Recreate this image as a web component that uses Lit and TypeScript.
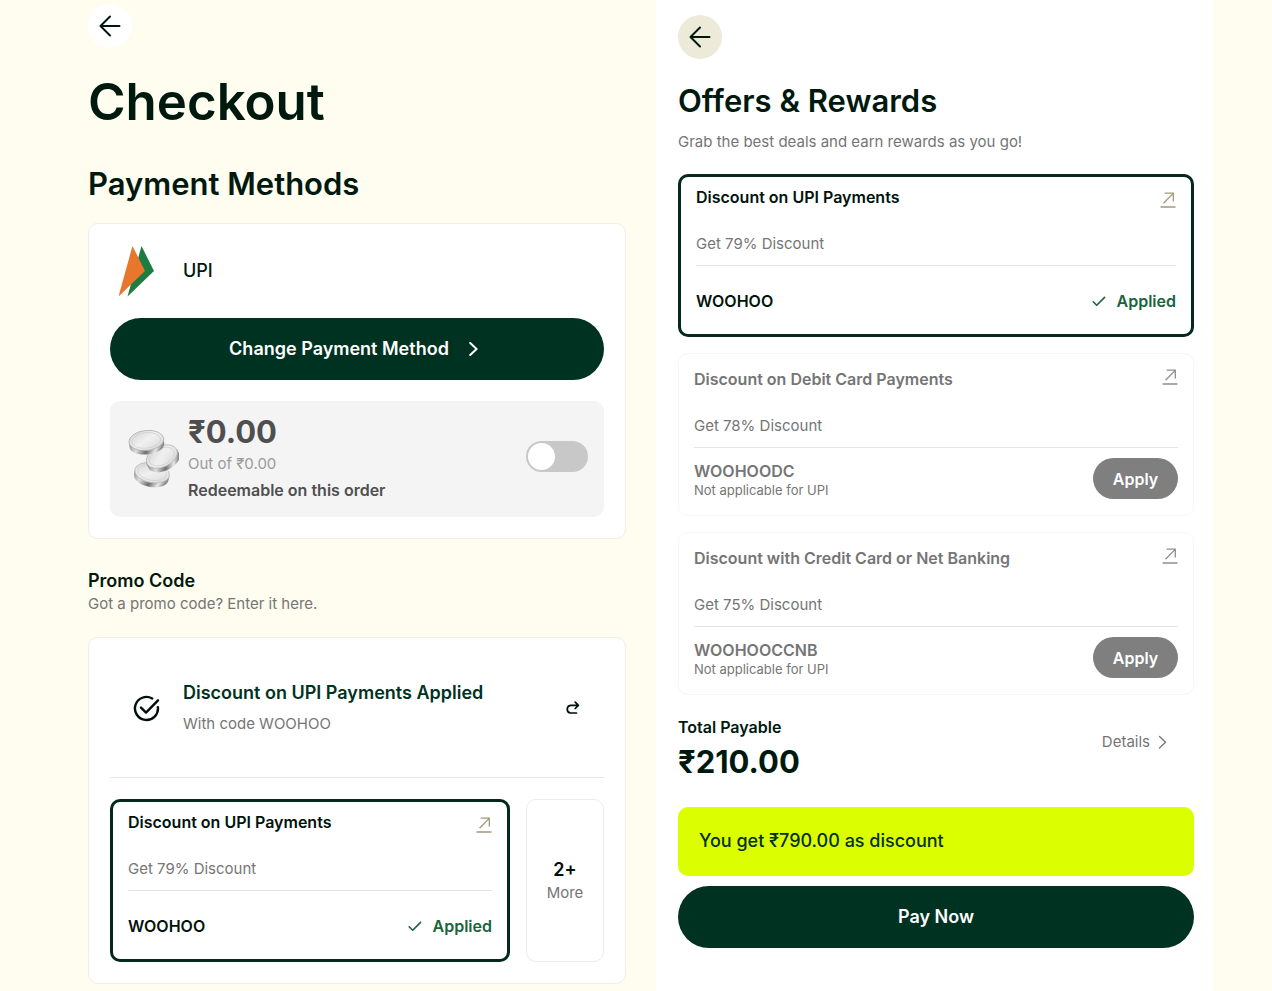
import { LitElement, html, css, nothing } from "lit";
import { customElement, property, state } from "lit/decorators.js";
import { classMap } from "lit/directives/class-map.js";

interface Offer {
  title: string;
  detail: string;
  code: string;
  applied: boolean;
  note?: string;
}

const OFFERS: Offer[] = [
  { title: "Discount on UPI Payments", detail: "Get 79% Discount", code: "WOOHOO", applied: true },
  {
    title: "Discount on Debit Card Payments",
    detail: "Get 78% Discount",
    code: "WOOHOODC",
    applied: false,
    note: "Not applicable for UPI",
  },
  {
    title: "Discount with Credit Card or Net Banking",
    detail: "Get 75% Discount",
    code: "WOOHOOCCNB",
    applied: false,
    note: "Not applicable for UPI",
  },
];

const base = css`
  *,
  *::before,
  *::after {
    box-sizing: border-box;
  }
  h1,
  h2,
  h3,
  p {
    margin: 0;
  }
  button {
    font: inherit;
    border: 0;
    padding: 0;
    background: none;
    color: inherit;
    cursor: pointer;
  }
  a {
    color: inherit;
    text-decoration: none;
  }
  svg {
    display: block;
    flex: none;
  }
`;

const backArrow = html`<svg width="22" height="22" viewBox="0 0 22 22" fill="none" stroke="currentColor" stroke-width="2" stroke-linecap="round" stroke-linejoin="round" aria-hidden="true">
  <path d="M20.5 11H1.5M11 1.5L1.5 11L11 20.5" />
</svg>`;

const chevron = html`<svg width="16" height="14" viewBox="0 0 16 14" fill="none" stroke="currentColor" stroke-width="2" stroke-linecap="round" stroke-linejoin="round" aria-hidden="true">
  <path d="M1.2 1L7.6 7L1.2 13" />
</svg>`;

const thinChevron = html`<svg width="9" height="14" viewBox="0 0 9 14" fill="none" stroke="currentColor" stroke-width="1.3" stroke-linecap="round" stroke-linejoin="round" aria-hidden="true">
  <path d="M1.5 1.5L7.5 7.2L1.5 13" />
</svg>`;

@customElement("offer-card")
export class OfferCard extends LitElement {
  @property({ attribute: false }) offer!: Offer;

  static styles = [
    base,
    css`
      :host {
        display: block;
        min-width: 0;
      }
      .card {
        display: flex;
        flex-direction: column;
        height: 100%;
        min-height: 163px;
        padding: 14px 15px 6px;
        border: 1px solid #f7f7f7;
        border-radius: 10px;
        background: #fff;
        color: #757575;
        font-size: 15px;
        line-height: 22px;
      }
      .card.applied {
        padding: 9px 15px 0;
        border: 3px solid #04291c;
        color: #00130c;
      }
      .head {
        display: flex;
        justify-content: space-between;
        align-items: flex-start;
        gap: 12px;
        height: 22px;
      }
      .title,
      .code,
      .status {
        font-size: 16px;
        font-weight: 600;
      }
      .open {
        padding-top: 1px;
        color: #8f8f8f;
      }
      .applied .open {
        padding-top: 6px;
        color: #a3987c;
      }
      .detail {
        margin-top: 25px;
        padding-bottom: 10px;
        border-bottom: 1px solid #e6e6e6;
        color: #757575;
      }
      .foot {
        display: flex;
        flex: 1;
        align-items: center;
        justify-content: space-between;
        gap: 12px;
      }
      .applied .foot {
        padding-top: 2px;
      }
      .note {
        font-size: 13px;
        line-height: 16px;
      }
      .status {
        display: flex;
        align-items: center;
        gap: 11px;
        color: #19633d;
      }
      .apply {
        min-width: 85px;
        height: 41px;
        border-radius: 21px;
        background: #7f7f7f;
        color: #fff;
        font-size: 16px;
        font-weight: 600;
      }
    `,
  ];

  render() {
    const { title, detail, code, applied, note } = this.offer;
    return html`<article class=${classMap({ card: true, applied })}>
      <div class="head">
        <h3 class="title">${title}</h3>
        <a class="open" href="#" aria-label=${`Open ${title}`}>
          <svg width="16" height="16" viewBox="0 0 16 16" fill="none" stroke="currentColor" stroke-width="1.3">
            <path d="M3.5 11.3L13 1.6M4.6 1.2H13.3V9.6M0.5 15H15.5" />
          </svg>
        </a>
      </div>
      <p class="detail">${detail}</p>
      <div class="foot">
        <div>
          <p class="code">${code}</p>
          ${note ? html`<p class="note">${note}</p>` : nothing}
        </div>
        ${applied
          ? html`<span class="status">
              <svg width="14" height="11" viewBox="0 0 14 11" fill="none" stroke="currentColor" stroke-width="1.6" stroke-linecap="round" stroke-linejoin="round" aria-hidden="true">
                <path d="M1.2 5.8L4.7 9.3L12.6 1.4" />
              </svg>
              Applied
            </span>`
          : html`<button class="apply" type="button">Apply</button>`}
      </div>
    </article>`;
  }
}

@customElement("app-root")
export class AppRoot extends LitElement {
  @state() private redeem = false;

  static styles = [
    base,
    css`
      :host {
        display: block;
        background: #fffcf0;
        color: #00190f;
        font-family: Inter, "Liberation Sans", sans-serif;
        font-size: 15px;
        line-height: 22px;
      }
      .page {
        display: grid;
        grid-template-columns: minmax(0, 538fr) minmax(0, 557fr);
        column-gap: 30px;
        min-height: 100vh;
        padding: 0 59px 0 88px;
      }
      .checkout {
        padding: 4px 0 6px;
      }
      .offers {
        padding: 15px 19px 40px 22px;
        background: #fff;
      }
      .back {
        display: grid;
        place-items: center;
        width: 44px;
        height: 44px;
        border-radius: 50%;
        background: #fff;
      }
      .offers .back {
        background: #eeead9;
      }
      h1 {
        margin-top: 24px;
        font-size: 51px;
        line-height: 60px;
        font-weight: 600;
      }
      h2 {
        font-size: 31px;
        line-height: 40px;
        font-weight: 600;
      }
      .checkout h2 {
        margin-top: 32px;
      }
      .offers h2 {
        margin-top: 22px;
      }
      .muted {
        color: #757575;
      }
      .panel {
        display: flex;
        flex-direction: column;
        gap: 21px;
        padding: 21px;
        border: 1px solid #eeeeea;
        border-radius: 10px;
        background: #fff;
      }
      .payment {
        margin-top: 19px;
      }
      .method {
        display: flex;
        align-items: center;
        height: 52px;
      }
      .lead {
        flex: none;
        width: 73px;
        padding-left: 7px;
      }
      .method-name {
        font-size: 18px;
        font-weight: 500;
      }
      .primary {
        display: flex;
        align-items: center;
        justify-content: center;
        gap: 20px;
        width: 100%;
        height: 62px;
        border-radius: 31px;
        background: #003222;
        color: #fff;
        font-size: 18px;
        font-weight: 600;
      }
      .wallet {
        display: flex;
        align-items: center;
        height: 116px;
        padding: 0 16px 6px 18px;
        border-radius: 10px;
        background: #f4f4f4;
        color: #4f4f4f;
      }
      .wallet-text {
        flex: 1;
        padding-left: 9px;
      }
      .amount {
        font-size: 31px;
        line-height: 42px;
        font-weight: 700;
      }
      .limit {
        margin-bottom: 4px;
        color: #9a9a9a;
      }
      .strong {
        font-size: 16px;
        font-weight: 600;
      }
      .toggle {
        appearance: none;
        flex: none;
        display: flex;
        align-items: center;
        width: 62px;
        height: 31px;
        margin: 0;
        padding: 0 2px;
        border-radius: 16px;
        background: #c8c8c8;
        cursor: pointer;
      }
      .toggle::before {
        content: "";
        width: 27px;
        height: 27px;
        border-radius: 50%;
        background: #fff;
      }
      .toggle:checked {
        justify-content: flex-end;
        background: #003222;
      }
      .promo-title {
        margin-top: 30px;
        font-size: 18px;
        line-height: 24px;
        font-weight: 600;
      }
      .promo {
        margin-top: 22px;
      }
      .promo-head {
        display: flex;
        align-items: center;
        height: 119px;
        padding-bottom: 20px;
        border-bottom: 1px solid #e8e8e8;
      }
      .check {
        flex: none;
        width: 73px;
        padding-left: 23px;
        color: #00100a;
      }
      .promo-text {
        flex: 1;
      }
      .applied-title {
        margin-bottom: 8px;
        color: #003222;
        font-size: 18px;
        line-height: 24px;
        font-weight: 600;
      }
      .undo {
        margin-right: 24px;
        color: #00100a;
      }
      .promo-row {
        display: grid;
        grid-template-columns: minmax(0, 400fr) minmax(0, 78fr);
        gap: 16px;
      }
      .more {
        display: flex;
        flex-direction: column;
        align-items: center;
        justify-content: center;
        border: 1px solid #ececec;
        border-radius: 10px;
      }
      .more-count {
        color: #00100a;
        font-size: 18px;
        line-height: 24px;
        font-weight: 600;
      }
      .intro {
        margin-top: 10px;
      }
      .list {
        display: grid;
        gap: 16px;
        margin-top: 21px;
      }
      .total {
        display: flex;
        align-items: flex-start;
        justify-content: space-between;
        margin-top: 21px;
      }
      .total .amount {
        margin-top: 3px;
      }
      .details {
        display: flex;
        align-items: center;
        gap: 8px;
        margin: 15px 27px 0 0;
        color: #757575;
      }
      .saving {
        margin: 24px 0 10px;
        padding: 22px 21px 23px;
        border-radius: 10px;
        background: #dbff00;
        color: #053020;
        font-size: 18px;
        line-height: 24px;
        font-weight: 500;
      }
    `,
  ];

  private onToggle(e: Event) {
    this.redeem = (e.target as HTMLInputElement).checked;
  }

  private coins() {
    return html`<svg width="51" height="66" viewBox="0 -6 51 66" aria-hidden="true">
      <defs>
        <linearGradient id="rim" x1="0" x2="1" y1="0" y2="0.2">
          <stop offset="0" stop-color="#8a8a8a" />
          <stop offset="0.3" stop-color="#dedede" />
          <stop offset="0.6" stop-color="#6f6f6f" />
          <stop offset="0.85" stop-color="#e8e8e8" />
          <stop offset="1" stop-color="#8c8c8c" />
        </linearGradient>
        <linearGradient id="face" x1="0" x2="1" y1="0" y2="1">
          <stop offset="0" stop-color="#d2d2d2" />
          <stop offset="0.5" stop-color="#f0f0f0" />
          <stop offset="1" stop-color="#d6d6d6" />
        </linearGradient>
      </defs>
      <g transform="rotate(10 23 47)">
        <path d="M6 43V48C6 54 14 58 23.500 58S41 54 41 48V43Z" fill="url(#rim)" />
        <ellipse cx="23.500" cy="43.500" rx="17.500" ry="10" fill="url(#face)" stroke="#b5b5b5" stroke-width="0.7" />
        <ellipse cx="23.500" cy="43.500" rx="14.500" ry="7.800" fill="none" stroke="#cccccc" stroke-width="0.6" />
      </g>
      <g transform="rotate(-25 34 28)">
        <path d="M17 27V32C17 38 25 42 34 42S51 38 51 32V27Z" fill="url(#rim)" />
        <ellipse cx="34" cy="27.500" rx="16.500" ry="10.500" fill="url(#face)" stroke="#b0b0b0" stroke-width="0.7" />
        <ellipse cx="34" cy="27.500" rx="13.500" ry="8.200" fill="none" stroke="#cccccc" stroke-width="0.6" />
      </g>
      <g transform="rotate(-6 18 13)">
        <path d="M1 11V16C1 22 9 25.500 18.500 25.500S36 22 36 16V11Z" fill="url(#rim)" />
        <ellipse cx="18.500" cy="11.500" rx="17.500" ry="10" fill="url(#face)" stroke="#a8a8a8" stroke-width="0.7" />
        <ellipse cx="18.500" cy="11.500" rx="14.500" ry="7.800" fill="none" stroke="#cacaca" stroke-width="0.6" />
      </g>
    </svg>`;
  }

  private checkout() {
    return html`<section class="checkout">
      <button class="back" type="button" aria-label="Back">${backArrow}</button>
      <h1>Checkout</h1>
      <h2>Payment Methods</h2>
      <div class="panel payment">
        <div class="method">
          <div class="lead">
            <svg width="38" height="52" viewBox="0 0 38 52" aria-hidden="true">
              <path d="M24.500 1L37 26L10.500 51.500Z" fill="#1d7d40" />
              <path d="M15.500 1L28 26L1.500 51.500Z" fill="#e8762c" />
            </svg>
          </div>
          <span class="method-name">UPI</span>
        </div>
        <button class="primary" type="button">Change Payment Method ${chevron}</button>
        <div class="wallet">
          ${this.coins()}
          <div class="wallet-text">
            <p class="amount">₹0.00</p>
            <p class="limit">Out of ₹0.00</p>
            <label class="strong" for="redeem">Redeemable on this order</label>
          </div>
          <input class="toggle" id="redeem" type="checkbox" role="switch" .checked=${this.redeem} @change=${this.onToggle} />
        </div>
      </div>
      <h3 class="promo-title">Promo Code</h3>
      <p class="muted">Got a promo code? Enter it here.</p>
      <div class="panel promo">
        <div class="promo-head">
          <div class="check">
            <svg width="27" height="27" viewBox="0 0 27 27" fill="none" stroke="currentColor" stroke-width="2.4" stroke-linecap="round" stroke-linejoin="round" aria-hidden="true">
              <path d="M24.900 12.200A11.500 11.500 0 1 1 19.200 3.500" />
              <path d="M8 12.600L13 17.600L25 5.300" />
            </svg>
          </div>
          <div class="promo-text">
            <p class="applied-title">Discount on UPI Payments Applied</p>
            <p class="muted">With code WOOHOO</p>
          </div>
          <button class="undo" type="button" aria-label="Remove code">
            <svg width="15" height="14" viewBox="0 0 15 14" fill="none" stroke="currentColor" stroke-width="1.7" stroke-linecap="round" stroke-linejoin="round">
              <path d="M13 4.300H5.500A3.900 3.900 0 0 0 5.500 12H11.500M10.200 1.100L13.400 4.300L10.200 7.500" />
            </svg>
          </button>
        </div>
        <div class="promo-row">
          <offer-card .offer=${OFFERS[0]}></offer-card>
          <button class="more" type="button">
            <span class="more-count">2+</span>
            <span class="muted">More</span>
          </button>
        </div>
      </div>
    </section>`;
  }

  private rewards() {
    return html`<section class="offers">
      <button class="back" type="button" aria-label="Back">${backArrow}</button>
      <h2>Offers &amp; Rewards</h2>
      <p class="intro muted">Grab the best deals and earn rewards as you go!</p>
      <div class="list">${OFFERS.map((o) => html`<offer-card .offer=${o}></offer-card>`)}</div>
      <div class="total">
        <div>
          <p class="strong">Total Payable</p>
          <p class="amount">₹210.00</p>
        </div>
        <a class="details" href="#">Details ${thinChevron}</a>
      </div>
      <p class="saving">You get ₹790.00 as discount</p>
      <button class="primary" type="button">Pay Now</button>
    </section>`;
  }

  render() {
    return html`<main class="page">${this.checkout()}${this.rewards()}</main>`;
  }
}
